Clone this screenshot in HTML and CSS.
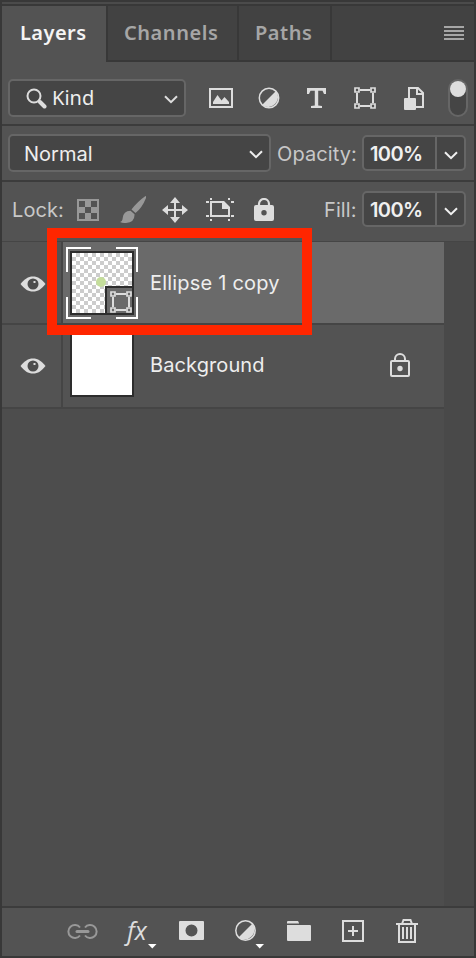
FILE: index.html
```
<!DOCTYPE html>
<html lang="en">
<head>
<meta charset="utf-8">
<title>Layers</title>
<link rel="stylesheet" href="styles.css">
</head>
<body>
<svg class="defs" aria-hidden="true">
  <defs>
    <symbol id="half" viewBox="0 0 22 22"><circle cx="11" cy="11" r="9.7" fill="none" stroke="currentColor" stroke-width="1.5"/><path d="M18 4A10 10 0 0 1 4 18Z" fill="currentColor"/></symbol>
    <symbol id="shape" viewBox="0 0 22 22"><g fill="none" stroke="currentColor"><path stroke-width="2" d="M6 3H16M6 19H16M3 6V16M19 6V16"/><path stroke-width="1.7" d="M1 1H5V5H1ZM17 1H21V5H17ZM1 17H5V21H1ZM17 17H21V21H17Z"/></g></symbol>
    <symbol id="chevron" viewBox="0 0 14 9"><path d="M1 1.2L7 7.2L13 1.2" fill="none" stroke="currentColor" stroke-width="2"/></symbol>
    <symbol id="eye" viewBox="0 0 26 16"><path fill="currentColor" d="M0.500 8C4.500 3 8 .5 13 .5S21.500 3 25.500 8C21.500 13 18 15.500 13 15.500S4.500 13 .5 8Z"/><circle cx="13" cy="8" r="5.500" fill="#4d4d4d"/><rect x="13.500" y="5" width="2" height="2" fill="currentColor"/></symbol>
  </defs>
</svg>
<main class="panel">
  <nav class="tabs">
    <span class="tab active">Layers</span>
    <span class="tab">Channels</span>
    <span class="tab paths">Paths</span>
    <svg class="menu" width="20" height="14"><path d="M0 1H20M0 5H20M0 9H20M0 13H20" stroke="currentColor" stroke-width="2"/></svg>
  </nav>

  <section class="filters">
    <div class="select kind">
      <svg width="21" height="21" viewBox="0 0 21 21" fill="none" stroke="currentColor"><circle cx="8" cy="8" r="6.500" stroke-width="2"/><path d="M12.500 12.500L14 14" stroke-width="2.500"/><path d="M14 14L18.500 18.500" stroke-width="4" stroke-linecap="round"/></svg>
      <span>Kind</span>
      <svg class="chev" width="14" height="9"><use href="#chevron"/></svg>
    </div>
    <svg width="24" height="20"><path d="M1 1H23V19H1Z" fill="none" stroke="currentColor" stroke-width="2"/><path fill="currentColor" d="M4 16V14L8.500 7L12.500 12.500L15.500 9L20 14V16Z"/></svg>
    <svg width="22" height="22"><use href="#half"/></svg>
    <svg width="19" height="20"><path fill="currentColor" d="M0 0H19V6H17L15.500 2.700H11.200V17.500L15 18V20H4V18L7.800 17.500V2.700H3.500L2 6H0Z"/></svg>
    <svg width="22" height="22"><use href="#shape"/></svg>
    <svg width="20" height="23"><path fill="none" stroke="currentColor" stroke-width="2" d="M5 11V1H14L19 6V20H12M13 1V7H19"/><path fill="currentColor" d="M1 11H11Q12 11 12 12V22Q12 23 11 23H1Q0 23 0 22V12Q0 11 1 11Z"/></svg>
    <div class="toggle"><i></i></div>
  </section>

  <section class="blend">
    <div class="select mode"><span>Normal</span><svg class="chev" width="14" height="9"><use href="#chevron"/></svg></div>
    <label>Opacity:</label>
    <div class="field"><b>100%</b><span><svg width="14" height="9"><use href="#chevron"/></svg></span></div>
  </section>

  <section class="locks">
    <label>Lock:</label>
    <svg class="dim" width="22" height="22"><path fill="none" stroke="currentColor" stroke-width="2" d="M1 1H21V21H1Z"/><path fill="currentColor" d="M8 2H14V8H8ZM2 8H8V14H2ZM14 8H20V14H14ZM8 14H14V20H8Z"/></svg>
    <svg class="dim" width="26" height="27"><path fill="currentColor" d="M25.500 0Q26.500 0 26 2Q22 12 15.500 17L11.500 13.500Q17 6 25.500 0ZM10.500 14.700L14.500 18.200Q15 26.500 6 27Q3 27.200 0 26Q2.500 25.500 2.700 22Q3.300 15 10.500 14.700Z"/></svg>
    <svg width="26" height="26"><path stroke="currentColor" stroke-width="2" d="M13 4V22M4 13H22"/><path fill="currentColor" d="M13 0L18 6H8ZM13 26L8 20H18ZM0 13L6 8V18ZM26 13L20 18V8Z"/></svg>
    <svg width="28" height="23"><path fill="none" stroke="currentColor" stroke-width="2" d="M5 4H17L23 10V18H5Z"/><path fill="currentColor" d="M16 3H18L24 9V11H16ZM4 0H6V2H4ZM22 0H24V2H22ZM4 21H6V23H4ZM22 21H24V23H22ZM0 3H3V5H0ZM25 3H28V5H25ZM0 17H3V19H0ZM25 17H28V19H25Z"/></svg>
    <svg width="20" height="23"><path d="M5 9V6A5 5 0 0 1 15 6V9" fill="none" stroke="currentColor" stroke-width="2.200"/><path fill="currentColor" fill-rule="evenodd" d="M2 7H18Q20 7 20 9V21Q20 23 18 23H2Q0 23 0 21V9Q0 7 2 7ZM10 12A2.700 2.700 0 1 0 10 17.400A2.700 2.700 0 1 0 10 12Z"/></svg>
    <label class="fill">Fill:</label>
    <div class="field"><b>100%</b><span><svg width="14" height="9"><use href="#chevron"/></svg></span></div>
  </section>

  <section class="list">
    <article class="layer selected">
      <div class="visibility"><svg width="26" height="16"><use href="#eye"/></svg></div>
      <div class="body">
        <div class="frame">
          <div class="thumb checker"><i class="dot"></i><div class="badge"><svg width="22" height="22"><use href="#shape"/></svg></div></div>
          <svg class="corners" width="72" height="72"><path fill="none" stroke="#fff" stroke-width="2" d="M1 25V1H25M50 1H71V25M71 50V71H50M25 71H1V50"/></svg>
        </div>
        <span class="name">Ellipse 1 copy</span>
      </div>
    </article>
    <article class="layer">
      <div class="visibility"><svg width="26" height="16"><use href="#eye"/></svg></div>
      <div class="body">
        <div class="frame"><div class="thumb"></div></div>
        <span class="name">Background</span>
        <svg class="locked" width="20" height="24"><path fill="none" stroke="currentColor" stroke-width="2" d="M5 8V6A5 5 0 0 1 15 6V8M2 8H18Q19 8 19 9V22Q19 23 18 23H2Q1 23 1 22V9Q1 8 2 8Z"/><circle cx="10" cy="15.500" r="2.700" fill="currentColor"/></svg>
      </div>
    </article>
  </section>

  <footer class="actions">
    <svg class="dim" viewBox="-27 -23 54 48"><path fill="none" stroke="currentColor" stroke-width="2" d="M-3 -3.500A6.500 6.500 0 1 0 -3 4.500M2 -3.500A6.500 6.500 0 1 1 2 4.500"/><path stroke="currentColor" stroke-width="3" stroke-linecap="round" d="M-6 .5H5"/></svg>
    <div class="fx"><em>fx</em><svg width="9" height="5"><path fill="#fff" d="M0 0H8.500L4.300 4.500Z"/></svg></div>
    <svg viewBox="-27 -23 54 48"><path fill="currentColor" fill-rule="evenodd" d="M-11 -10H12Q13 -10 13 -9V8Q13 9 12 9H-11Q-12 9 -12 8V-9Q-12 -10 -11 -10ZM.5 -6.500A6 6 0 1 0 .5 5.500A6 6 0 1 0 .5 -6.500Z"/></svg>
    <svg viewBox="-27 -23 54 48"><use href="#half" x="-10.500" y="-11.500" width="22" height="22"/><path fill="#fff" d="M10.500 13H19L14.700 17.500Z"/></svg>
    <svg viewBox="-27 -23 54 48"><path fill="currentColor" d="M-12 -9Q-12 -10 -11 -10H-1L0 -8V-7.500H-12ZM-12 -6H11Q12 -6 12 -5V9Q12 10 11 10H-11Q-12 10 -12 9Z"/></svg>
    <svg viewBox="-27 -23 54 48"><path fill="none" stroke="currentColor" stroke-width="2" d="M-10 -10H10V10H-10ZM0 -5V5M-5 0H5"/></svg>
    <svg viewBox="-27 -23 54 48"><path fill="none" stroke="currentColor" stroke-width="2" d="M-11 -7H11M-5 -7L-3.500 -11H3.500L5 -7M-8 -6V11H8V-6M-4 -4V8M0 -4V8M4 -4V8"/></svg>
  </footer>
</main>
<div class="highlight"></div>
</body>
</html>
```

FILE: styles.css
```
* { box-sizing: border-box; }
body { margin: 0; background: #383838; color: #ddd; font: 20px/24px Inter, sans-serif; overflow: hidden; }
svg { display: block; flex: none; }
.defs { position: absolute; width: 0; height: 0; }
.dim { color: #989898; }
.panel { width: 476px; height: 958px; padding: 0 2px 2px; border-top: 2px solid #383838; display: flex; flex-direction: column; background: #383838; }

.tabs { flex: none; height: 60px; display: flex; align-items: stretch; border-top: 2px solid #4b4b4b; padding-top: 2px; font: 600 20px/54px "Noto Sans", sans-serif; color: #a6a6a6; background: linear-gradient(#383838 0 2px, #424242 2px 56px, #383838 56px); }
.tab { width: 131px; padding-left: 16px; letter-spacing: .55px; border-right: 2px solid #383838; }
.tab.active { width: 106px; padding-left: 18px; letter-spacing: .45px; color: #f4f4f4; background: #535353; }
.tab.paths { width: 93px; }
.menu { margin: 20px 10px 0 auto; color: #a6a6a6; }

.filters, .blend, .locks { flex: none; display: grid; align-items: center; background: #535353; }
.select, .field { display: flex; align-items: center; border: 2px solid #666; border-radius: 5px; background: #454545; }
.select { height: 38px; }
.chev { margin: 3px 0 0 auto; }

.filters { height: 64px; padding: 0 6px 0 6px; border-bottom: 2px solid #3c3c3c; grid-template-columns: 201px 48.500px 49.500px 47px 50px 44px 20px; }
.filters > svg { margin-top: 10px; }
.filters .select { margin-top: 10px; }
.kind { width: 178px; padding: 0 6px 0 16px; font-family: "Noto Sans", sans-serif; }
.kind span { margin-left: 5px; color: #eee; font-size: 20px; letter-spacing: 0; }
.toggle { width: 20px; height: 38px; margin-top: 10px; border: 2px solid #666; border-radius: 10px; background: #454545; }
.toggle i { display: block; width: 16px; height: 16px; border-radius: 50%; background: #ddd; }

.blend { height: 56px; border-bottom: 2px solid #3c3c3c; padding: 0 8px 0 6px; grid-template-columns: 269px 85px 104px; }
.mode { width: 263px; padding: 0 6px 0 14px; color: #eee; letter-spacing: 0; }
.mode span { margin-top: 2px; }
label { color: #c8c8c8; letter-spacing: .1px; }
.blend label { padding-top: 2px; }
.field { width: 104px; height: 36px; color: #f0f0f0; }
.field b { width: 71px; padding: 2px 0 0 6px; font-weight: 600; font-size: 20px; letter-spacing: -.6px; }
.field span { align-self: stretch; flex: 1; display: flex; align-items: center; justify-content: center; padding-top: 4px; border-left: 2px solid #666; }

.locks { height: 60px; padding: 0 8px 4px 10px; border-bottom: 1px solid #454545; grid-template-columns: 65px 43px 42px 44px 48px 70px 38px 104px; }
.locks .field { margin-top: -1px; }

.list { flex: 1; background: linear-gradient(90deg, #4d4d4d 442px, #494949 442px); }
.layer { width: 442px; height: 83px; display: flex; background: #535353; border-bottom: 2px solid #454545; }
.layer:last-child { height: 84px; }
.visibility { width: 61px; padding: 34px 0 0 17.500px; border-right: 2px solid #454545; }
.layer:last-child .visibility { padding-top: 33px; }
.body { flex: 1; height: 80px; display: flex; align-items: center; }
.selected .body { background: #6a6a6a; height: 81px; padding-top: 1px; }
.frame { position: relative; width: 72px; height: 72px; padding: 4px; margin: 0 12px 0 3px; }
.thumb { position: relative; width: 64px; height: 64px; border: 2px solid #2d2d2d; background: #fff; }
.checker { background: repeating-conic-gradient(#ccc 0 25%, #fff 0 50%) 0 0 / 8px 8px; }
.dot { position: absolute; left: 24px; top: 24px; width: 10px; height: 10px; border-radius: 50%; background: #c4dd9b; }
.badge { position: absolute; right: 0; bottom: 0; width: 27px; height: 27px; padding: 3px 0 0 3px; border: solid #2d2d2d; border-width: 2px 0 0 2px; background: #6a6a6a; }
.corners { position: absolute; inset: 0; }
.name { color: #eee; letter-spacing: .2px; }
.layer:last-child .name { letter-spacing: .1px; }
.locked { margin: 0 34px 0 auto; }

.actions { flex: none; height: 50px; display: flex; padding-left: 54px; border-top: 2px solid #3c3c3c; background: #535353; }
.actions > * { width: 54px; height: 48px; }
.fx { position: relative; padding-left: 17px; }
.fx em { display: block; font: italic 400 25px/44px "Open Sans", sans-serif; }
.fx svg { position: absolute; left: 37.500px; top: 36px; }

.highlight { position: absolute; left: 47px; top: 228px; width: 265px; height: 107px; border: 10px solid #ff2600; }
```
